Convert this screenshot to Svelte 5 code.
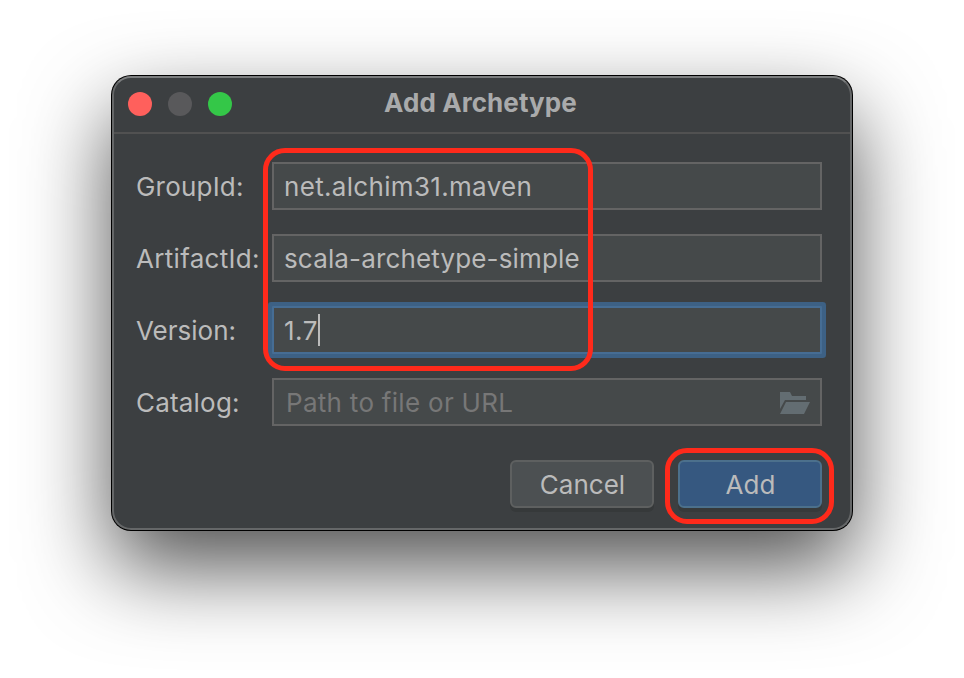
<script>
  const fields = [
    { id: 'group', label: 'GroupId:', value: 'net.alchim31.maven' },
    { id: 'artifact', label: 'ArtifactId:', value: 'scala-archetype-simple' },
    { id: 'version', label: 'Version:', value: '1.7', focused: true },
    { id: 'catalog', label: 'Catalog:', placeholder: 'Path to file or URL' }
  ];
</script>

<main class="stage">
  <section class="window">
    <header class="titlebar">
      <div class="lights">
        <span class="light close"></span>
        <span class="light minimize"></span>
        <span class="light zoom"></span>
      </div>
      <h1>Add Archetype</h1>
    </header>

    <div class="form">
      {#each fields as field}
        <div class="row">
          <div class="label l-{field.id}">{field.label}</div>
          <div class="field" class:focused={field.focused}>
            {#if field.value}
              <span class="value v-{field.id}">{field.value}</span>
              {#if field.focused}<i class="caret"></i>{/if}
            {:else}
              <span class="placeholder">{field.placeholder}</span>
              <svg class="folder" width="30" height="22" viewBox="0 0 30 22">
                <path d="M0 0H10L12 4H26V8H5L0 17Z" />
                <path d="M6 10H30L24 22H0Z" />
              </svg>
            {/if}
          </div>
        </div>
      {/each}
    </div>

    <footer class="actions">
      <button class="cancel">Cancel</button>
      <button class="primary">Add</button>
    </footer>
  </section>

  <div class="callout callout-fields"></div>
  <div class="callout callout-add"></div>
</main>

<style>
  :global(body) {
    margin: 0;
    background: #fff;
  }

  .stage {
    position: relative;
    box-sizing: border-box;
    width: 964px;
    height: 678px;
    padding: 76px 112px 0;
    overflow: hidden;
    background: #fff;
    font-family: Inter, 'Liberation Sans', sans-serif;
    font-size: 26px;
    font-weight: 430;
    color: #bbb;
  }

  .window {
    box-sizing: border-box;
    width: 740px;
    height: 454px;
    border: 2px solid #656768;
    border-top-color: #7c7e7f;
    border-radius: 19px;
    background: #3c3f41;
    box-shadow:
      0 0 0 1px #000,
      0 37px 86px rgba(0, 0, 0, 0.69);
  }

  .titlebar {
    position: relative;
    display: flex;
    align-items: center;
    justify-content: center;
    box-sizing: border-box;
    height: 56px;
    padding: 0 3px 4px 0;
    border-bottom: 2px solid #515151;
  }

  .lights {
    position: absolute;
    left: 14px;
    top: 14px;
    display: flex;
    gap: 16px;
  }

  .light {
    width: 24px;
    height: 24px;
    border-radius: 50%;
  }

  .close {
    background: #ff605c;
  }

  .minimize {
    background: #59595b;
  }

  .zoom {
    background: #34c748;
  }

  h1 {
    margin: 0;
    font-size: 26px;
    line-height: 32px;
    font-weight: 700;
    letter-spacing: 0.08px;
    color: #a9aaab;
  }

  .form {
    display: flex;
    flex-direction: column;
    gap: 24px;
    padding: 28px 28px 0 22px;
  }

  .row {
    display: flex;
    height: 48px;
  }

  .label {
    width: 136px;
    line-height: 50px;
    white-space: nowrap;
  }

  .l-group {
    letter-spacing: 0.2px;
  }

  .l-artifact {
    letter-spacing: 0.3px;
  }

  .l-catalog {
    letter-spacing: 0.2px;
  }

  .field {
    display: flex;
    flex: 1;
    align-items: center;
    box-sizing: border-box;
    padding: 0 10px;
    border: 2px solid #646464;
    background: #45494a;
    white-space: nowrap;
  }

  .v-group {
    letter-spacing: 0.32px;
  }

  .v-artifact {
    letter-spacing: 0.15px;
  }

  .v-version {
    letter-spacing: 0.5px;
  }

  .focused {
    border-color: #466d94;
    border-radius: 1px;
    box-shadow: 0 0 0 4px #3d6185;
  }

  .caret {
    width: 2px;
    height: 32px;
    margin-top: -1px;
    background: #bbb;
  }

  .placeholder {
    padding-left: 2px;
    letter-spacing: 0.29px;
    color: #777;
  }

  .folder {
    margin: 2px 0 0 auto;
    fill: #636d72;
  }

  .actions {
    display: flex;
    justify-content: flex-end;
    gap: 24px;
    padding: 34px 28px 0;
  }

  button {
    box-sizing: border-box;
    width: 144px;
    height: 48px;
    padding: 0 0 0 1px;
    border: 2px solid #5e6060;
    border-radius: 6px;
    background: #4c5052;
    box-shadow: 0 4px 0 #36393a;
    color: #bbb;
    font: inherit;
  }

  .primary {
    border-color: #4c708c;
    background: #365880;
  }

  .callout {
    position: absolute;
    box-sizing: border-box;
    border: 5px solid #ff2a1b;
    border-radius: 22px;
  }

  .callout-fields {
    left: 263px;
    top: 148px;
    width: 330px;
    height: 223px;
  }

  .callout-add {
    left: 665px;
    top: 448px;
    width: 169px;
    height: 76px;
  }
</style>
